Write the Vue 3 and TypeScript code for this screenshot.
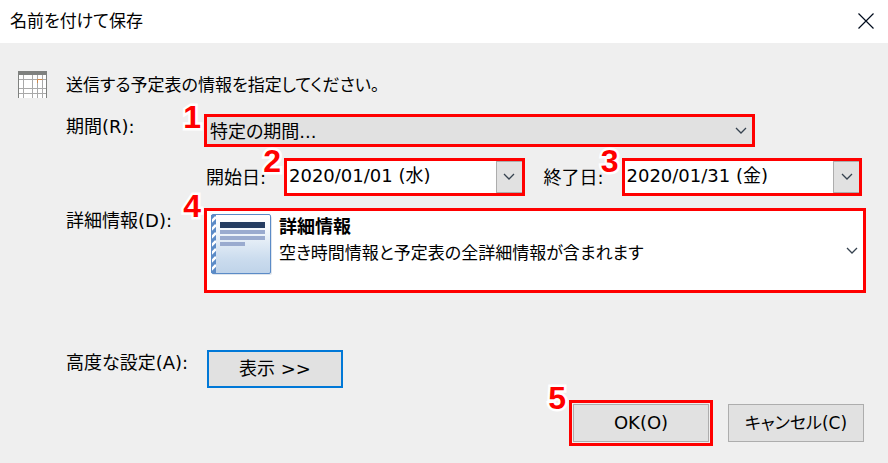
<script setup lang="ts">
import { ref } from 'vue'

interface DateField {
  id: string
  label: string
  mark: string
}

const period = ref('特定の期間...')
const periods: string[] = ['特定の期間...', '今日', '明日', '今後 7 日間', '今後 30 日間', '予定表全体']
const dates = ref<Record<string, string>>({
  start: '2020/01/01 (水)',
  end: '2020/01/31 (金)',
})
const dateFields: DateField[] = [
  { id: 'start', label: '開始日:', mark: '2' },
  { id: 'end', label: '終了日:', mark: '3' },
]
</script>

<template>
  <main class="dialog">
    <header class="titlebar">
      <h1 class="title">名前を付けて保存</h1>
      <button class="close" type="button" aria-label="閉じる">
        <svg width="16" height="16" viewBox="0 0 16 16" fill="none" stroke="#000b1c" stroke-width="1.2">
          <path d="M0.5 0.5 15.5 15.5M15.5 0.5 0.5 15.5" />
        </svg>
      </button>
    </header>

    <form class="content" @submit.prevent>
      <div class="intro">
        <svg width="30" height="28" viewBox="0 0 30 28" fill="none">
          <path d="M0 3h29v24H0z" fill="#fff" />
          <path d="M1 8.500h27M1 17.500h27M1 22.500h27M5.500 4v23M14.500 4v23M19.500 4v23M24.500 4v23" stroke="#a9a9a9" />
          <path d="M0.500 4v23M28.500 4v23" stroke="#7f817f" />
          <path d="M0 0h29v4H0z" fill="#7f817f" />
          <path d="M19.500 12V8.500h5" stroke="#d0894a" />
        </svg>
        <p class="compact">送信する予定表の情報を指定してください。</p>
      </div>

      <div class="row">
        <label class="label" for="period">期間(R):</label>
        <div class="frame period">
          <span class="mark">1</span>
          <select id="period" v-model="period">
            <option v-for="item in periods" :key="item">{{ item }}</option>
          </select>
          <svg class="chevron" width="12" height="8" viewBox="0 0 12 8" fill="none" stroke="#36424f" stroke-width="1.3">
            <path d="M1 1l5 5 5-5" />
          </svg>
        </div>
      </div>

      <div class="dates">
        <template v-for="field in dateFields" :key="field.id">
          <label class="date-label" :for="field.id">{{ field.label }}</label>
          <div class="frame date">
            <span class="mark">{{ field.mark }}</span>
            <input :id="field.id" v-model="dates[field.id]" type="text" />
            <button class="drop" type="button" :aria-label="field.label">
              <svg width="12" height="8" viewBox="0 0 12 8" fill="none" stroke="#36424f" stroke-width="1.3">
                <path d="M1 1l5 5 5-5" />
              </svg>
            </button>
          </div>
        </template>
      </div>

      <div class="row detail-row">
        <label class="label" for="detail">詳細情報(D):</label>
        <div class="frame detail-frame">
          <span class="mark high">4</span>
          <button id="detail" class="detail" type="button" aria-haspopup="listbox">
            <svg width="62" height="62" viewBox="0 0 62 62">
              <defs>
                <linearGradient id="page" x1="0" y1="0" x2="0" y2="1">
                  <stop offset="0" stop-color="#fff" />
                  <stop offset="0.25" stop-color="#f4f8fc" />
                  <stop offset="0.75" stop-color="#cbdcee" />
                  <stop offset="1" stop-color="#bfd3e9" />
                </linearGradient>
                <clipPath id="spine"><path d="M1 1h4v58H1z" /></clipPath>
              </defs>
              <rect x="1" y="2" width="60" height="59" rx="2" fill="#dfe5ec" />
              <rect x="0.500" y="0.500" width="59" height="59" rx="1.500" fill="url(#page)" stroke="#5b8bc7" />
              <path d="M0 1h5v58H0z" fill="#5b8bc7" />
              <path
                clip-path="url(#spine)"
                d="M0 8l5-5M0 16l5-5M0 24l5-5M0 32l5-5M0 40l5-5M0 48l5-5M0 56l5-5"
                stroke="#fff"
                stroke-width="2.500"
              />
              <path d="M9 8h45v6H9z" fill="#243c61" />
              <path d="M9 16h45v4H9zM9 22h45v4H9zM9 28h25v4H9z" fill="#9aabcf" />
            </svg>
            <span class="detail-text">
              <strong>詳細情報</strong>
              <span class="compact">空き時間情報と予定表の全詳細情報が含まれます</span>
            </span>
            <svg width="12" height="8" viewBox="0 0 12 8" fill="none" stroke="#36424f" stroke-width="1.3">
              <path d="M1 1l5 5 5-5" />
            </svg>
          </button>
        </div>
      </div>

      <div class="row advanced">
        <label class="label" for="advanced">高度な設定(A):</label>
        <button id="advanced" class="button focused" type="button">表示 &gt;&gt;</button>
      </div>

      <footer class="actions">
        <div class="frame ok">
          <span class="mark high">5</span>
          <button class="button" type="submit">OK(O)</button>
        </div>
        <button class="button compact" type="button">キャンセル(C)</button>
      </footer>
    </form>
  </main>
</template>

<style>
body {
  background: #efefef;
}
</style>

<style scoped>
.dialog {
  color: #000;
  background: #efefef;
  font-family: "DejaVu Sans", "Noto Sans CJK JP", sans-serif;
  font-size: 18px;
  line-height: 26px;
  font-feature-settings: "palt";
}

.dialog * {
  box-sizing: border-box;
}

button,
input,
select {
  margin: 0;
  padding: 0;
  border: 0;
  border-radius: 0;
  color: inherit;
  font: inherit;
  font-feature-settings: inherit;
}

svg {
  display: block;
  flex: none;
}

.compact {
  font-size: 17px;
}

.titlebar {
  display: flex;
  align-items: center;
  justify-content: space-between;
  height: 43px;
  padding: 0 14px 2px 10px;
  background: #fff;
}

.title {
  margin: 0;
  font-size: 17px;
  font-weight: 400;
}

.close {
  background: none;
}

.content {
  padding: 28px 22px 17px 18px;
}

.intro {
  display: flex;
  align-items: center;
  gap: 18px;
  margin-bottom: 15px;
}

.intro p {
  margin: 0;
}

.row {
  display: grid;
  grid-template-columns: 138px 1fr;
  padding-left: 48px;
}

.frame {
  position: relative;
  border: 3px solid #f00;
}

.mark {
  position: absolute;
  z-index: 1;
  top: -12px;
  right: 100%;
  margin-right: 6px;
  color: #f00;
  font: 700 32px/24px "Liberation Sans", sans-serif;
  -webkit-text-stroke: 5px #fff;
  paint-order: stroke fill;
  pointer-events: none;
}

.mark.high {
  top: -17px;
}

.period {
  height: 33px;
  margin-right: 111px;
}

.period select {
  display: block;
  width: 100%;
  height: 100%;
  padding: 2px 24px 0 3px;
  background: #e1e1e1;
  appearance: none;
}

.chevron {
  position: absolute;
  top: 10px;
  right: 5px;
  pointer-events: none;
}

.dates {
  display: grid;
  grid-template-columns: 78px minmax(0, 1fr) 97px minmax(0, 1fr);
  align-items: center;
  margin-top: 11px;
  padding: 0 4px 0 188px;
}

.date-label {
  padding-top: 2px;
}

.date-label:nth-of-type(2) {
  padding-left: 19px;
}

.date {
  display: flex;
  height: 38px;
  background: #fff;
}

.date input {
  flex: 1;
  min-width: 0;
  padding: 0 0 2px 2px;
  background: #fff;
}

.drop {
  display: grid;
  place-items: center;
  width: 26px;
  border: 1px solid #adadad;
  border-right: 0;
  background: #e1e1e1;
}

.detail-row {
  margin-top: 12px;
}

.detail {
  display: flex;
  width: 100%;
  height: 79px;
  padding: 3px 5px 0 4px;
  gap: 6px;
  background: #fff;
  text-align: left;
}

.detail-text {
  display: flex;
  flex: 1;
  flex-direction: column;
}

.detail > svg:last-child {
  margin-top: 33px;
}

.advanced {
  margin-top: 57px;
}

.button {
  width: 136px;
  height: 38px;
  border: 1px solid #adadad;
  background: #e1e1e1;
}

.focused {
  margin-left: 3px;
  border: 2px solid #0078d7;
}

.actions {
  display: flex;
  align-items: center;
  justify-content: flex-end;
  gap: 15px;
  margin-top: 12px;
  padding-right: 2px;
}

.ok {
  padding: 1px;
}

.ok .button {
  display: block;
}
</style>
